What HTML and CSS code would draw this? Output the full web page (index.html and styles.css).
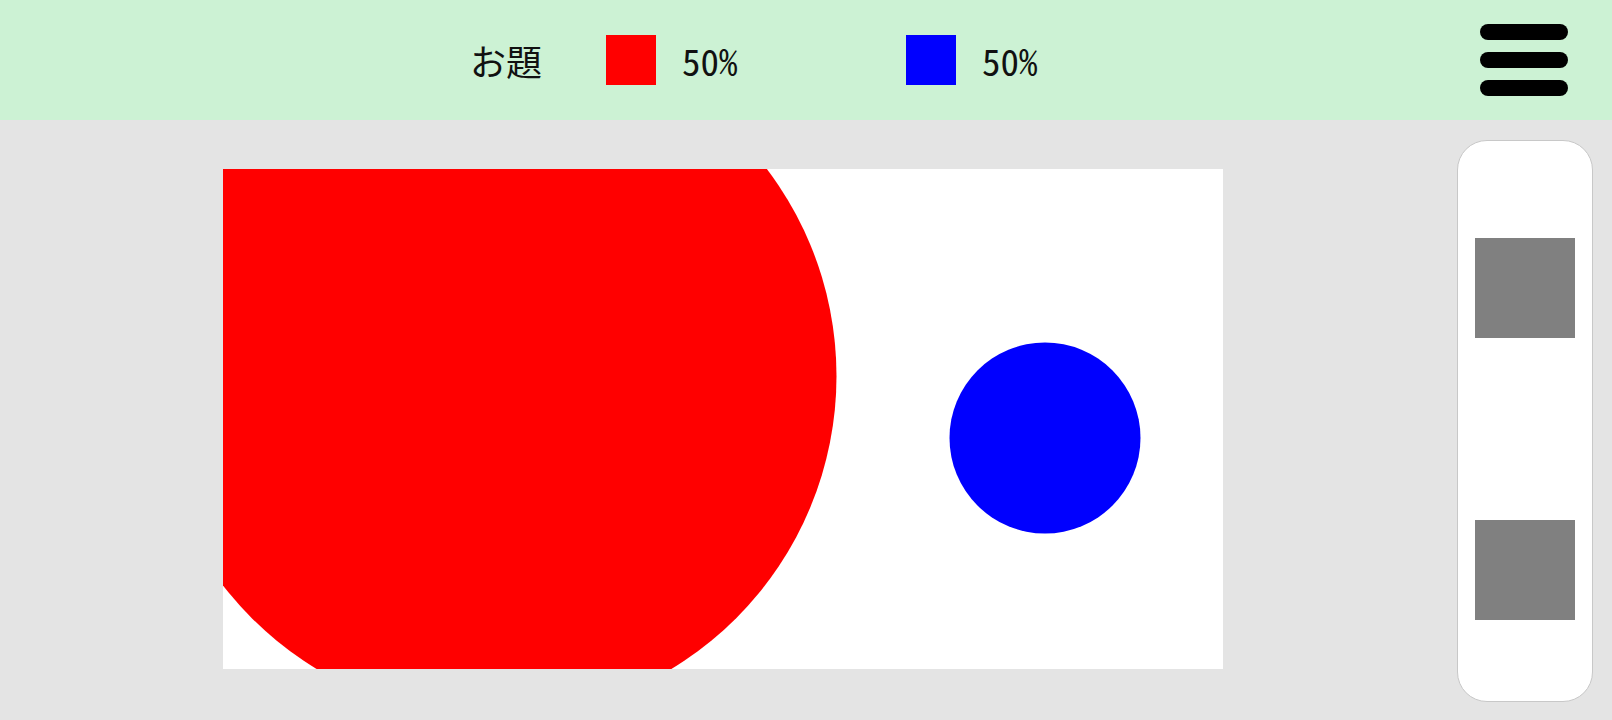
FILE: index.html
```html
<!DOCTYPE html>
<html lang="ja">
<head>
<meta charset="utf-8">
<title>お題</title>
<link rel="stylesheet" href="styles.css">
</head>
<body>
<header class="topbar">
  <div class="legend">
    <span class="title">お題</span>
    <div class="item">
      <span class="swatch swatch-red"></span>
      <span class="pct">50%</span>
    </div>
    <div class="item">
      <span class="swatch swatch-blue"></span>
      <span class="pct">50%</span>
    </div>
  </div>
  <button class="menu" aria-label="menu">
    <span class="bar"></span>
    <span class="bar"></span>
    <span class="bar"></span>
  </button>
</header>
<main class="stage">
  <div class="canvas">
    <svg width="1000" height="500" viewBox="0 0 1000 500">
      <rect x="0" y="0" width="1000" height="500" fill="#ffffff"/>
      <circle cx="271" cy="207" r="342.5" fill="#ff0000"/>
      <circle cx="822" cy="269" r="95.5" fill="#0000ff"/>
    </svg>
  </div>
  <aside class="panel">
    <div class="tile"></div>
    <div class="tile"></div>
  </aside>
</main>
</body>
</html>
```
FILE: styles.css
```css
* { box-sizing: border-box; }
html, body {
  margin: 0;
  padding: 0;
  width: 1612px;
  height: 720px;
  overflow: hidden;
  background: #e4e4e4;
  font-family: "Noto Sans CJK JP", sans-serif;
  color: #111;
}
.topbar {
  height: 120px;
  background: #ccf2d4;
  display: flex;
  align-items: center;
  padding: 0 44px 0 470px;
}
.legend {
  display: flex;
  align-items: center;
}
.title {
  font-size: 36px;
  width: 136px;
  line-height: 1;
}
.item {
  display: flex;
  align-items: center;
  width: 300px;
}
.swatch {
  width: 50px;
  height: 50px;
  margin-right: 26px;
}
.swatch-red { background: #ff0000; }
.swatch-blue { background: #0000ff; }
.pct {
  font-family: "Noto Sans CJK JP", sans-serif;
  font-feature-settings: "hwid" 1, "zero" 1;
  font-size: 37px;
  line-height: 1;
}
.menu {
  margin-left: auto;
  border: 0;
  padding: 0;
  background: none;
  display: flex;
  flex-direction: column;
  gap: 12px;
  width: 88px;
}
.bar {
  display: block;
  width: 88px;
  height: 16px;
  border-radius: 8px;
  background: #000;
}
.stage {
  display: flex;
  align-items: flex-start;
  height: 600px;
  padding: 20px 19px 18px 223px;
}
.canvas {
  margin-top: 29px;
  width: 1000px;
  height: 500px;
  overflow: hidden;
}
.canvas svg { display: block; }
.panel {
  margin-left: auto;
  width: 136px;
  height: 562px;
  background: #fff;
  border: 1px solid #c8c8c8;
  border-radius: 30px;
  display: flex;
  flex-direction: column;
  align-items: center;
  padding-top: 97px;
  gap: 182px;
}
.tile {
  width: 100px;
  height: 100px;
  background: #808080;
}
```
